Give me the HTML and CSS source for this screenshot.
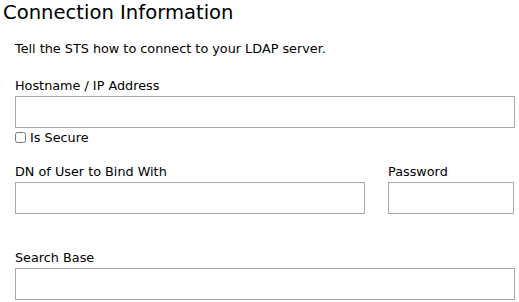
FILE: index.html
```html
<!DOCTYPE html>
<html lang="en">
<head>
    <meta charset="UTF-8">
    <title>Connection Information</title>
    <link rel="stylesheet" href="styles.css">
</head>
<body>
    <h2 class="title">Connection Information</h2>

    <div class="section">
        <p class="intro">Tell the STS how to connect to your LDAP server.</p>

        <div class="field">
            <label class="label" for="host">Hostname / IP Address</label>
            <input class="input" id="host" type="text">
            <label class="check"><input type="checkbox"> Is Secure</label>
        </div>

        <div class="row">
            <div class="field">
                <label class="label" for="dn">DN of User to Bind With</label>
                <input class="input" id="dn" type="text">
            </div>
            <div class="field">
                <label class="label" for="pw">Password</label>
                <input class="input" id="pw" type="password">
            </div>
        </div>

        <div class="field">
            <label class="label" for="base">Search Base</label>
            <input class="input" id="base" type="text">
        </div>
    </div>
</body>
</html>
```

FILE: styles.css
```css
body {
    margin: 0;
    padding: 0 4px 0 3px;
    background: #ffffff;
    color: #000000;
    font-family: 'DejaVu Sans', Verdana, sans-serif;
    font-size: 12.8px;
}

.title {
    margin: 0;
    padding-top: 1px;
    font-size: 19.6px;
    font-weight: normal;
    line-height: 24px;
}

.section {
    padding-left: 12px;
}

.intro {
    margin: 16px 0 21px;
    line-height: 16px;
}

.field {
    display: flex;
    flex-direction: column;
}

.label {
    line-height: 16px;
    margin-bottom: 2px;
}

.input {
    box-sizing: border-box;
    height: 32px;
    margin: 0;
    border: 1px solid #a9a9a9;
    background: #fff;
    font: inherit;
    padding: 2px 4px;
}

.check {
    display: flex;
    align-items: center;
    gap: 4px;
    height: 18px;
    margin-bottom: 18px;
}

.check input {
    margin: 0;
    width: 11px;
    height: 11px;
}

.row {
    display: grid;
    grid-template-columns: 350px 126px;
    gap: 23px;
    margin-bottom: 36px;
}
```
